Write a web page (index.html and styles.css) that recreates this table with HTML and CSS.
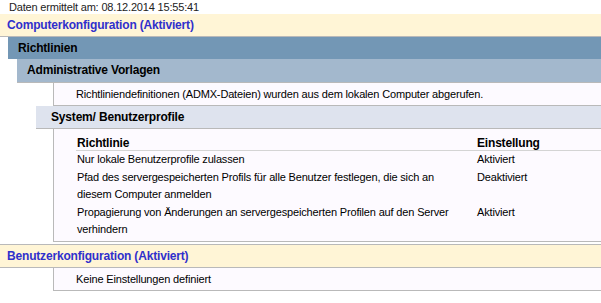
FILE: index.html
```html
<!DOCTYPE html>
<html lang="de">
<head>
<meta charset="utf-8">
<title>Bericht</title>
<link rel="stylesheet" href="styles.css">
</head>
<body>
<div class="stamp">Daten ermittelt am: 08.12.2014 15:55:41</div>

<div class="sec">Computerkonfiguration (Aktiviert)</div>
<div class="lvl1">
  <div class="bar1">Richtlinien</div>
  <div class="lvl2">
    <div class="bar2">Administrative Vorlagen</div>
    <div class="box box-a">Richtliniendefinitionen (ADMX-Dateien) wurden aus dem lokalen Computer abgerufen.</div>
    <div class="lvl3">
      <div class="bar3">System/ Benutzerprofile</div>
      <div class="box box-t">
        <table class="tbl">
          <colgroup><col class="col1"><col class="col2"></colgroup>
          <thead>
            <tr><th>Richtlinie</th><th>Einstellung</th></tr>
          </thead>
          <tbody>
            <tr><td class="name">Nur lokale Benutzerprofile zulassen</td><td>Aktiviert</td></tr>
            <tr><td class="name">Pfad des servergespeicherten Profils für alle Benutzer festlegen, die sich an diesem Computer anmelden</td><td>Deaktiviert</td></tr>
            <tr><td class="name">Propagierung von Änderungen an servergespeicherten Profilen auf den Server verhindern</td><td>Aktiviert</td></tr>
          </tbody>
        </table>
      </div>
    </div>
  </div>
</div>

<div class="sec sec-b">Benutzerkonfiguration (Aktiviert)</div>
<div class="box box-u">Keine Einstellungen definiert</div>
</body>
</html>
```
FILE: styles.css
```css
html, body {
  margin: 0;
  padding: 0;
  background: #ffffff;
}
body {
  font-family: "Liberation Sans", Arial, sans-serif;
  font-size: 11px;
  letter-spacing: -0.16px;
  color: #000000;
  width: 601px;
  overflow: hidden;
}
.stamp {
  height: 14px;
  line-height: 15px;
  padding-left: 9px;
  color: #222222;
  letter-spacing: -0.18px;
}
.sec {
  height: 22px;
  line-height: 22px;
  padding-left: 7px;
  background: #fff5d6;
  border-bottom: 1px solid #b9b9b9;
  color: #3030cc;
  font-weight: bold;
  font-size: 12px;
  letter-spacing: -0.18px;
}
.sec-b {
  margin-top: 2px;
  border-top: 1px solid #b9b9b9;
}
.lvl1 {
  margin-left: 8px;
}
.bar1 {
  height: 22px;
  line-height: 22px;
  padding-left: 10px;
  background: #7397b5;
  font-weight: bold;
  font-size: 12px;
  letter-spacing: -0.18px;
}
.lvl2 {
  margin-left: 9px;
}
.bar2 {
  height: 23px;
  line-height: 23px;
  padding-left: 10px;
  background: #a3b8cd;
  border-bottom: 1px solid #b9b9b9;
  font-weight: bold;
  font-size: 12px;
  letter-spacing: -0.18px;
}
.box {
  background: #fdfaff;
  border-left: 1px solid #b9b9b9;
  border-bottom: 1px solid #b9b9b9;
  padding-left: 22px;
}
.box-a {
  margin-left: 36px;
  height: 22px;
  line-height: 22px;
}
.lvl3 {
  margin-left: 19px;
}
.bar3 {
  height: 22px;
  line-height: 22px;
  padding-left: 15px;
  background: #dee3ee;
  border-bottom: 1px solid #b9b9b9;
  font-weight: bold;
  font-size: 12px;
  letter-spacing: -0.18px;
}
.box-t {
  margin-left: 17px;
  height: 112px;
}
.tbl {
  border-collapse: collapse;
  table-layout: fixed;
  width: 100%;
}
.col1 {
  width: 400px;
}
.tbl th {
  text-align: left;
  font-weight: bold;
  font-size: 12px;
  letter-spacing: -0.18px;
  height: 21px;
  padding: 0 0 0 1px;
  border-bottom: 1px solid #d4d4d4;
  vertical-align: bottom;
  line-height: 14px;
}
.tbl td {
  vertical-align: top;
  padding: 0 0 1px 1px;
  line-height: 17px;
}
.tbl td.name {
  padding-right: 20px;
}
.box-u {
  margin-left: 53px;
  height: 22px;
  line-height: 22px;
}
```
